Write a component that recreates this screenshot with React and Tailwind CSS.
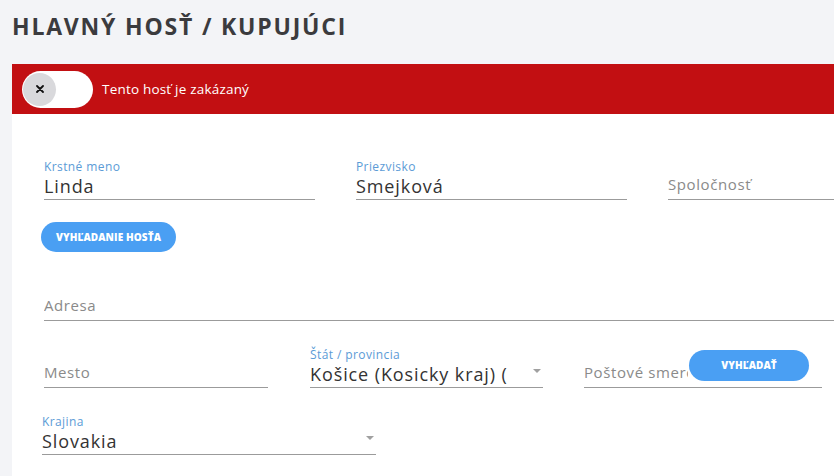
import React from "react";

const font = { fontFamily: '"Open Sans", "Noto Sans", sans-serif' };

function Caret() {
  return (
    <svg width="8" height="5" viewBox="0 0 8 5" className="shrink-0">
      <path d="M0 0 L8 0 L4 4 Z" fill="#a0a0a0" />
    </svg>
  );
}

function Field({ label, value, placeholder, width, caret, grow, textWidth, children }) {
  return (
    <div className={`relative flex flex-col ${grow ? "flex-1" : "shrink-0"}`} style={grow ? undefined : { width }}>
      <div className="h-[14px] text-[12px] leading-[14px] tracking-[0.4px] text-[#5b9bd6] whitespace-nowrap">{label || ""}</div>
      <div className="h-[26px] flex items-center border-b border-[#9b9b9b]">
        {value ? (
          <span className="flex-1 text-[18px] tracking-[0.9px] text-[#333] whitespace-nowrap overflow-hidden">{value}</span>
        ) : (
          <span
            className="text-[15px] tracking-[0.6px] text-[#8a8a8a] whitespace-nowrap overflow-hidden pb-[4px]"
            style={textWidth ? { width: textWidth } : { flex: 1 }}
          >
            {placeholder}
          </span>
        )}
        {caret && <span className="ml-auto pr-[2px] pb-[6px]"><Caret /></span>}
      </div>
      {children}
    </div>
  );
}

export default function App() {
  return (
    <div className="w-[834px] h-[476px] overflow-hidden bg-[#f3f4f7]" style={font}>
      <div className="h-[64px] pl-3 pt-[11px]">
        <h1 className="text-[23px] leading-[30px] font-bold tracking-[1.8px] text-[#3b3b3e] whitespace-nowrap">HLAVNÝ HOSŤ / KUPUJÚCI</h1>
      </div>
      <div className="ml-3 w-[900px]">
        <div className="h-[50px] bg-[#c20f12] flex items-center pl-[10px]">
          <div className="w-[71px] h-[37px] rounded-full bg-white flex items-center pl-[1px]">
            <div className="w-[33px] h-[33px] rounded-full bg-[#d9d9dc] flex items-center justify-center">
              <svg width="8" height="8" viewBox="0 0 8 8">
                <path d="M1 1 L7 7 M7 1 L1 7" stroke="#111" strokeWidth="1.8" strokeLinecap="round" />
              </svg>
            </div>
          </div>
          <span className="ml-[9px] text-[13.5px] tracking-[0.2px] text-white">Tento hosť je zakázaný</span>
        </div>
        <div className="bg-white h-[400px] pl-[32px] pt-[46px]">
          <div className="flex gap-[41px]">
            <Field label="Krstné meno" value="Linda" width={271} />
            <Field label="Priezvisko" value="Smejková" width={271} />
            <Field placeholder="Spoločnosť" width={271} />
          </div>
          <button className="mt-[22px] -ml-[3px] h-[30px] w-[135px] rounded-full bg-[#4a9ff3] text-white text-[10px] font-extrabold tracking-[0.1px]">
            VYHĽADANIE HOSŤA
          </button>
          <div className="mt-[29px] w-[800px] flex">
            <Field placeholder="Adresa" grow />
          </div>
          <div className="mt-[27px] flex">
            <Field placeholder="Mesto" width={224} />
            <div className="ml-[42px]">
              <Field label="Štát / provincia" value="Košice (Kosicky kraj) (" width={233} caret />
            </div>
            <div className="ml-[41px]">
              <Field placeholder="Poštové smerovacie číslo" width={238} textWidth={104}>
                <button className="absolute left-[105px] top-[2px] h-[31px] w-[120px] rounded-full bg-[#4a9ff3] text-white text-[10px] font-extrabold tracking-[0.1px]">
                  VYHĽADAŤ
                </button>
              </Field>
            </div>
          </div>
          <div className="mt-[27px] -ml-[2px]">
            <Field label="Krajina" value="Slovakia" width={334} caret />
          </div>
        </div>
      </div>
    </div>
  );
}
